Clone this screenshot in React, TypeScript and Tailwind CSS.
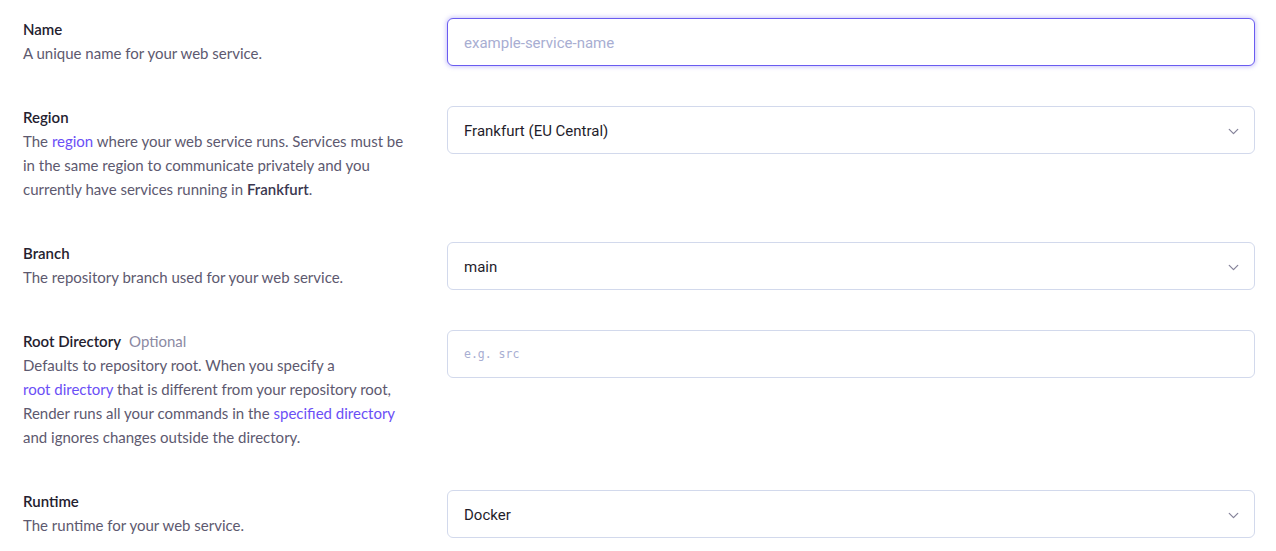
import { ChevronDown } from 'lucide-react';
import type { ReactNode } from 'react';

function Field({ label, optional, children, control }: { label: string; optional?: boolean; children: ReactNode; control: ReactNode }) {
  return (
    <div className="grid grid-cols-[390px_808px] gap-x-[34px]">
      <div className="-mt-px mb-px text-[15px] leading-6">
        <div className="font-semibold text-[#24212f]">
          {label}
          {optional && <span className="ml-2 font-normal text-[#8c8aa3]">Optional</span>}
        </div>
        <div className="text-[#5d596f]">{children}</div>
      </div>
      <div>{control}</div>
    </div>
  );
}

function Select({ value }: { value: string }) {
  return (
    <div className="flex h-12 items-center justify-between rounded-md border border-[#d2d9ec] bg-white pl-4 pr-3 pt-0.5 font-['Roboto',sans-serif] text-[15px] text-[#1f1d2b]">
      <span>{value}</span>
      <ChevronDown className="h-[17px] w-[17px] text-[#85839a]" strokeWidth={1.75} />
    </div>
  );
}

const A = ({ children }: { children: ReactNode }) => <span className="text-[#6b4ff6]">{children}</span>;

export default function App() {
  return (
    <div className="min-h-screen bg-white pt-[18px] pl-[23px] font-['Lato',sans-serif]">
      <div className="flex flex-col gap-10">
        <Field
          label="Name"
          control={
            <div className="flex h-12 items-center rounded-md border border-[#6a5cf0] bg-white px-4 pt-0.5 font-['Roboto',sans-serif] text-[15px] text-[#a8aed2] shadow-[0_0_4px_1px_rgba(106,92,240,0.35)]">
              example-service-name
            </div>
          }
        >
          A unique name for your web service.
        </Field>

        <Field label="Region" control={<Select value="Frankfurt (EU Central)" />}>
          The <A>region</A> where your web service runs. Services must be in the same region to communicate privately and you
          currently have services running in <span className="font-semibold text-[#3b3750]">Frankfurt</span>.
        </Field>

        <Field label="Branch" control={<Select value="main" />}>
          The repository branch used for your web service.
        </Field>

        <Field
          label="Root Directory"
          optional
          control={
            <div className="flex h-12 items-center rounded-md border border-[#d2d9ec] bg-white px-4 pt-0.5 font-['DejaVu_Sans_Mono',monospace] text-[11.5px] text-[#a8aed2]">
              e.g. src
            </div>
          }
        >
          Defaults to repository root. When you specify a<br />
          <A>root directory</A> that is different from your repository root, Render runs all your commands in the{' '}
          <A>specified directory</A> and ignores changes outside the directory.
        </Field>

        <Field label="Runtime" control={<Select value="Docker" />}>
          The runtime for your web service.
        </Field>
      </div>
    </div>
  );
}
